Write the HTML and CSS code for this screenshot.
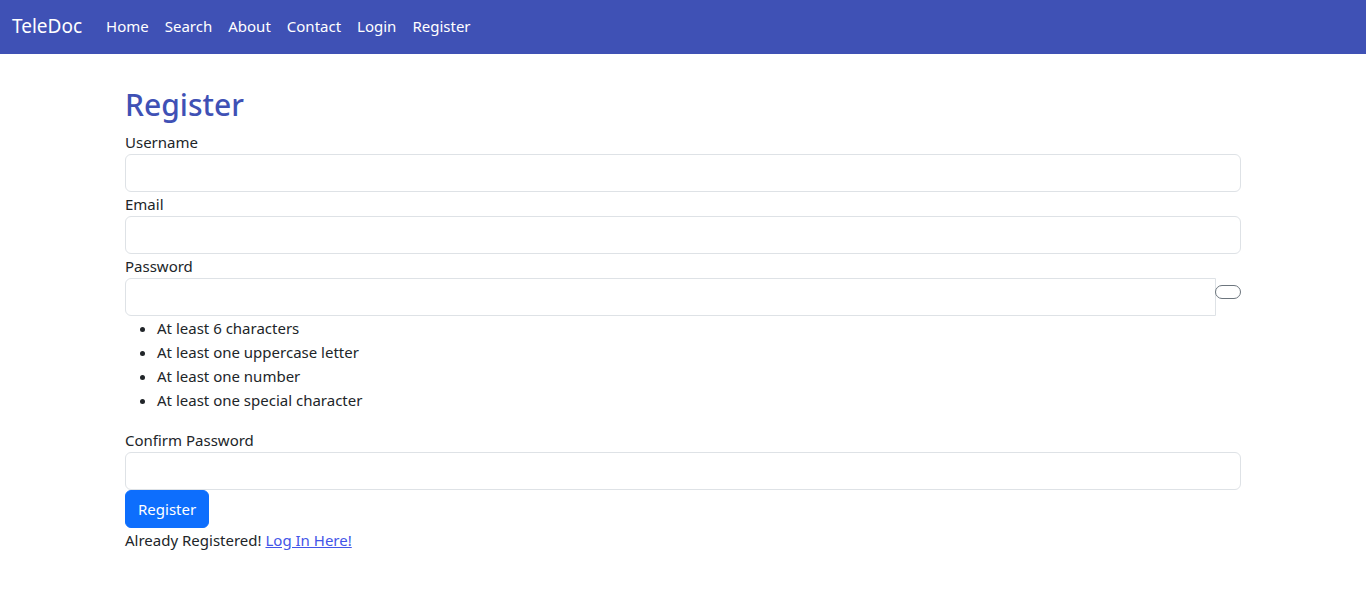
FILE: index.html
```html
<!DOCTYPE html>
<html lang="en">
<head>
<meta charset="utf-8">
<title>TeleDoc - Register</title>
<link rel="stylesheet" href="styles.css">
</head>
<body>
<nav class="navbar">
  <a class="brand" href="#">TeleDoc</a>
  <ul class="nav">
    <li><a href="#">Home</a></li>
    <li><a href="#">Search</a></li>
    <li><a href="#">About</a></li>
    <li><a href="#">Contact</a></li>
    <li><a href="#">Login</a></li>
    <li><a href="#">Register</a></li>
  </ul>
</nav>
<main class="container">
  <h2 class="title">Register</h2>
  <form class="form">
    <label class="label" for="u">Username</label>
    <input class="input" id="u" type="text">
    <label class="label" for="e">Email</label>
    <input class="input" id="e" type="email">
    <label class="label" for="p">Password</label>
    <div class="input-group">
      <input class="input input-left" id="p" type="password">
      <button class="toggle" type="button"></button>
    </div>
    <ul class="rules">
      <li>At least 6 characters</li>
      <li>At least one uppercase letter</li>
      <li>At least one number</li>
      <li>At least one special character</li>
    </ul>
    <label class="label" for="c">Confirm Password</label>
    <input class="input" id="c" type="password">
    <div><button class="btn" type="submit">Register</button></div>
  </form>
  <p class="already">Already Registered! <a href="#">Log In Here!</a></p>
</main>
</body>
</html>
```
FILE: styles.css
```css
* { box-sizing: border-box; }
body {
  margin: 0;
  font-family: "Noto Sans", "Open Sans", sans-serif;
  font-size: 15px;
  line-height: 24px;
  color: #212529;
  background: #fff;
}
.navbar {
  height: 54px;
  background: #3f51b5;
  display: flex;
  align-items: center;
  padding: 0 12px 2px;
}
.brand {
  color: #fff;
  text-decoration: none;
  font-size: 19px;
  margin-right: 16px;
}
.nav {
  list-style: none;
  margin: 0;
  padding: 0;
  display: flex;
}
.nav a {
  display: block;
  color: #fff;
  text-decoration: none;
  padding: 8px;
}
.container {
  width: 1116px;
  margin: 0 auto;
  padding-top: 30px;
}
.title {
  margin: 2px 0 6px;
  font-size: 30px;
  line-height: 38px;
  font-weight: 500;
  color: #3f51b5;
}
.form { display: flex; flex-direction: column; }
.label { display: block; }
.input {
  display: block;
  width: 100%;
  height: 38px;
  border: 1px solid #dee2e6;
  border-radius: 6px;
  font: inherit;
  padding: 6px 12px;
  background: #fff;
}
.input-group { display: flex; align-items: flex-start; }
.input-left {
  flex: 1;
  border-top-right-radius: 0;
  border-bottom-right-radius: 0;
}
.toggle {
  width: 26px;
  height: 14px;
  margin-top: 7px;
  margin-left: -1px;
  padding: 0;
  border: 1px solid #6c757d;
  border-radius: 7px;
  background: #fff;
}
.rules {
  margin: 0 0 16px;
  padding-left: 32px;
}
.btn {
  height: 38px;
  padding: 6px 12px;
  border: 1px solid #0d6efd;
  border-radius: 6px;
  background: #0d6efd;
  color: #fff;
  font: inherit;
}
.already { margin: 0; }
.already a { color: #4355e8; }
```
